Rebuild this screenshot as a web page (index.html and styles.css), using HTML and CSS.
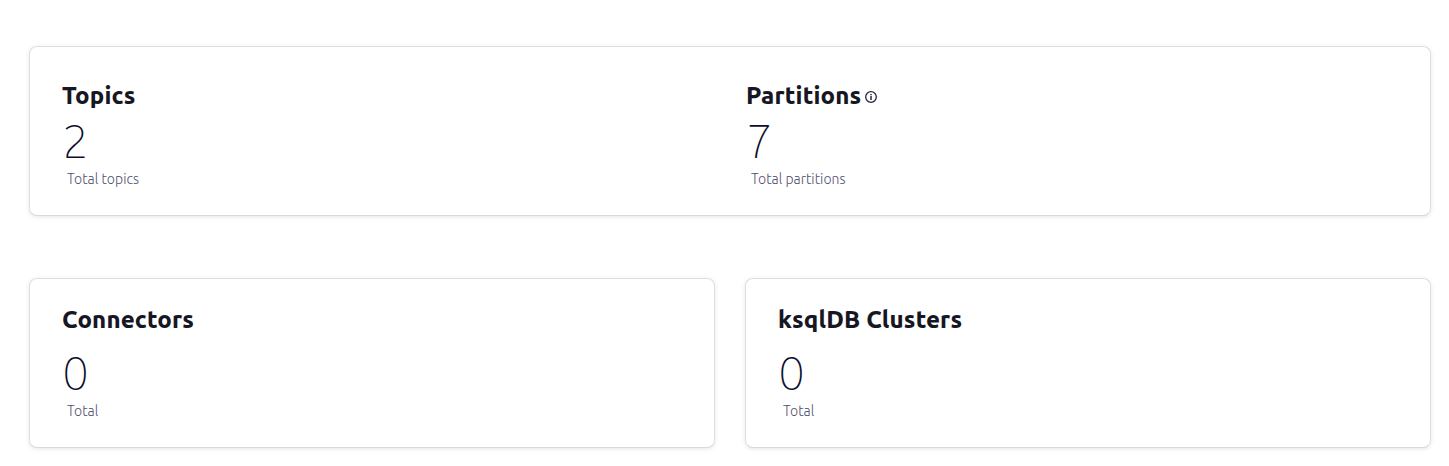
FILE: index.html
```html
<!DOCTYPE html>
<html lang="en">
<head>
<meta charset="utf-8">
<title>Cluster overview</title>
<link rel="stylesheet" href="styles.css">
</head>
<body>
<main class="overview">
  <section class="card card-wide">
    <div class="metric">
      <h2 class="title">Topics</h2>
      <div class="value">2</div>
      <div class="caption">Total topics</div>
    </div>
    <div class="metric">
      <h2 class="title">Partitions
        <svg class="info" viewBox="0 0 12 12" fill="none" stroke="currentColor"><circle cx="6" cy="6" r="5.3" stroke-width="1.3"/><path d="M6 5v4" stroke-width="1.5"/><path d="M6 3v1.2" stroke-width="1.5"/></svg>
      </h2>
      <div class="value">7</div>
      <div class="caption">Total partitions</div>
    </div>
  </section>
  <div class="row">
    <section class="card">
      <h2 class="title">Connectors</h2>
      <div class="value">0</div>
      <div class="caption">Total</div>
    </section>
    <section class="card">
      <h2 class="title">ksqlDB Clusters</h2>
      <div class="value">0</div>
      <div class="caption">Total</div>
    </section>
  </div>
</main>
</body>
</html>
```
FILE: styles.css
```css
* { box-sizing: border-box; }
body { margin: 0; background: #fff; color: #171724; font-family: Ubuntu, "Noto Sans", sans-serif; }
.overview { display: flex; flex-direction: column; gap: 62px; padding: 46px 18px 18px 29px; }
.card { height: 170px; padding: 25px 32px 0; border: 1px solid #e0e0e1; border-bottom-color: #d9d9da; border-radius: 8px; box-shadow: 0 1px 4px rgba(0,0,0,.1); background: #fff; }
.card-wide { display: grid; grid-template-columns: 684px 1fr; padding-top: 33px; }
.row { display: grid; grid-template-columns: 1fr 1fr; gap: 30px; }
.title { display: flex; align-items: center; gap: 4px; height: 32px; margin: 0; font-size: 24px; line-height: 32px; font-weight: 800; letter-spacing: .14px; white-space: nowrap; }
.info { width: 12px; height: 12px; margin-top: 2px; margin-left: -.4px; color: #252542; }
.value { height: 60px; margin-top: 6px; font-size: 48px; line-height: 60px; font-weight: 100; color: #0e0e2c; }
.card-wide .value { margin-top: -2px; }
.caption { height: 20px; margin-top: -1px; padding-left: 5px; font-size: 14px; line-height: 20px; font-weight: 300; letter-spacing: .02px; color: #50506f; white-space: nowrap; }
```
